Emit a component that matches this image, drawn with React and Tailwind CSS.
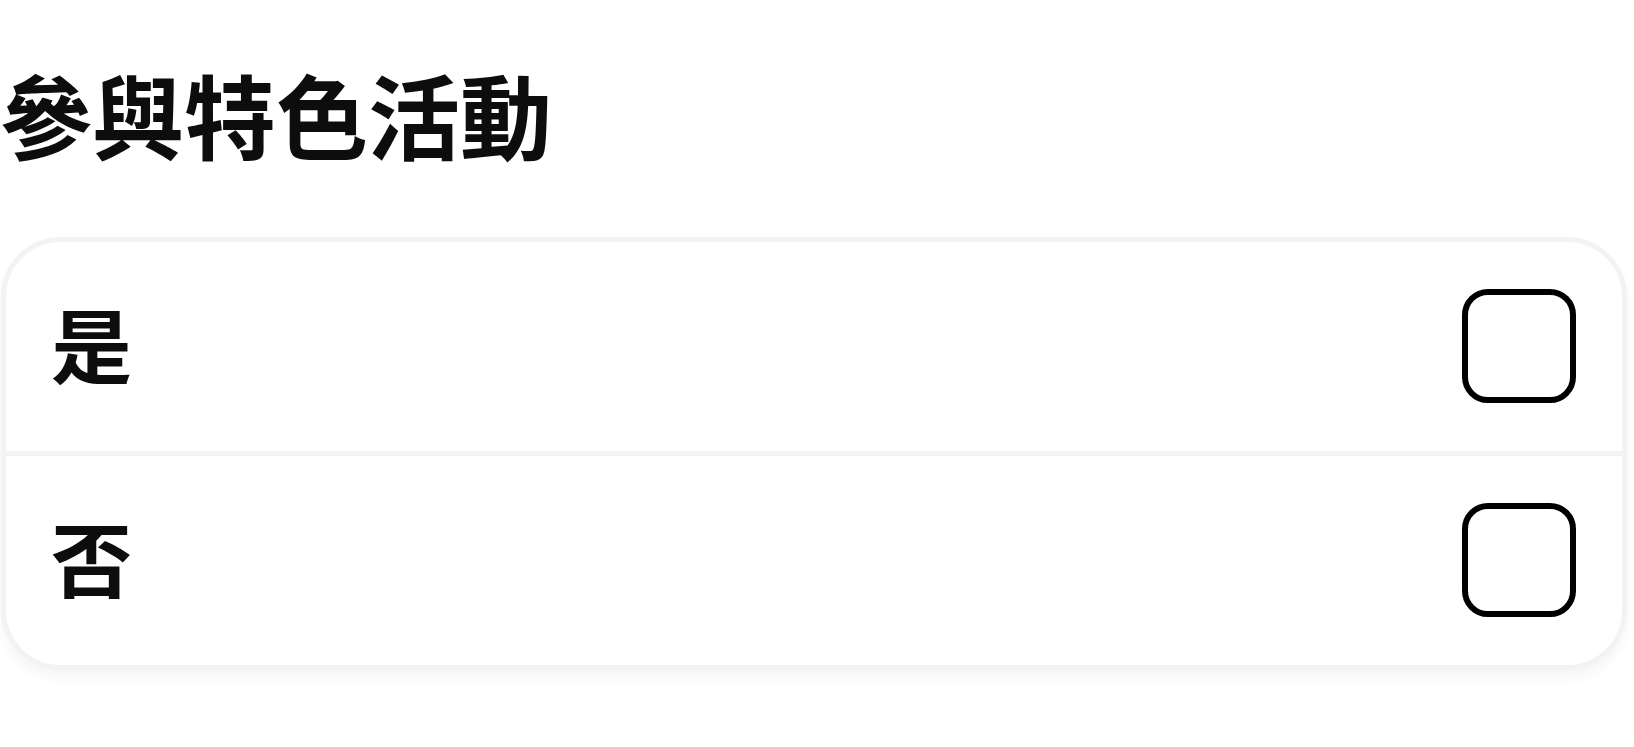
export default function App() {
  const font = { fontFamily: '"Noto Sans CJK TC", "Noto Sans CJK SC", sans-serif' };
  const rows = ["是", "否"];
  return (
    <div className="w-[1634px] h-[747px] bg-white text-[#0d0d0d]" style={font}>
      <div className="pt-[58px]">
        <h1 className="text-[92px] leading-[1.2] font-bold">參與特色活動</h1>
      </div>
      <div className="mt-[69px] ml-[1px] w-[1626px] rounded-[60px] border-[5px] border-[#f3f3f3] bg-white shadow-[0_8px_12px_rgba(0,0,0,0.04)] overflow-hidden">
        {rows.map((r, i) => (
          <div key={r}>
            {i > 0 && <div className="h-[5px] bg-[#f3f3f3]" />}
            <div className="h-[209px] flex items-center justify-between pl-[45px] pr-[46px]">
              <span className="text-[81px] font-semibold leading-none mb-[10px]">{r}</span>
              <div className="w-[114px] h-[114px] rounded-[26px] border-[6px] border-[#000000] bg-white mb-[2px]" />
            </div>
          </div>
        ))}
      </div>
    </div>
  );
}
